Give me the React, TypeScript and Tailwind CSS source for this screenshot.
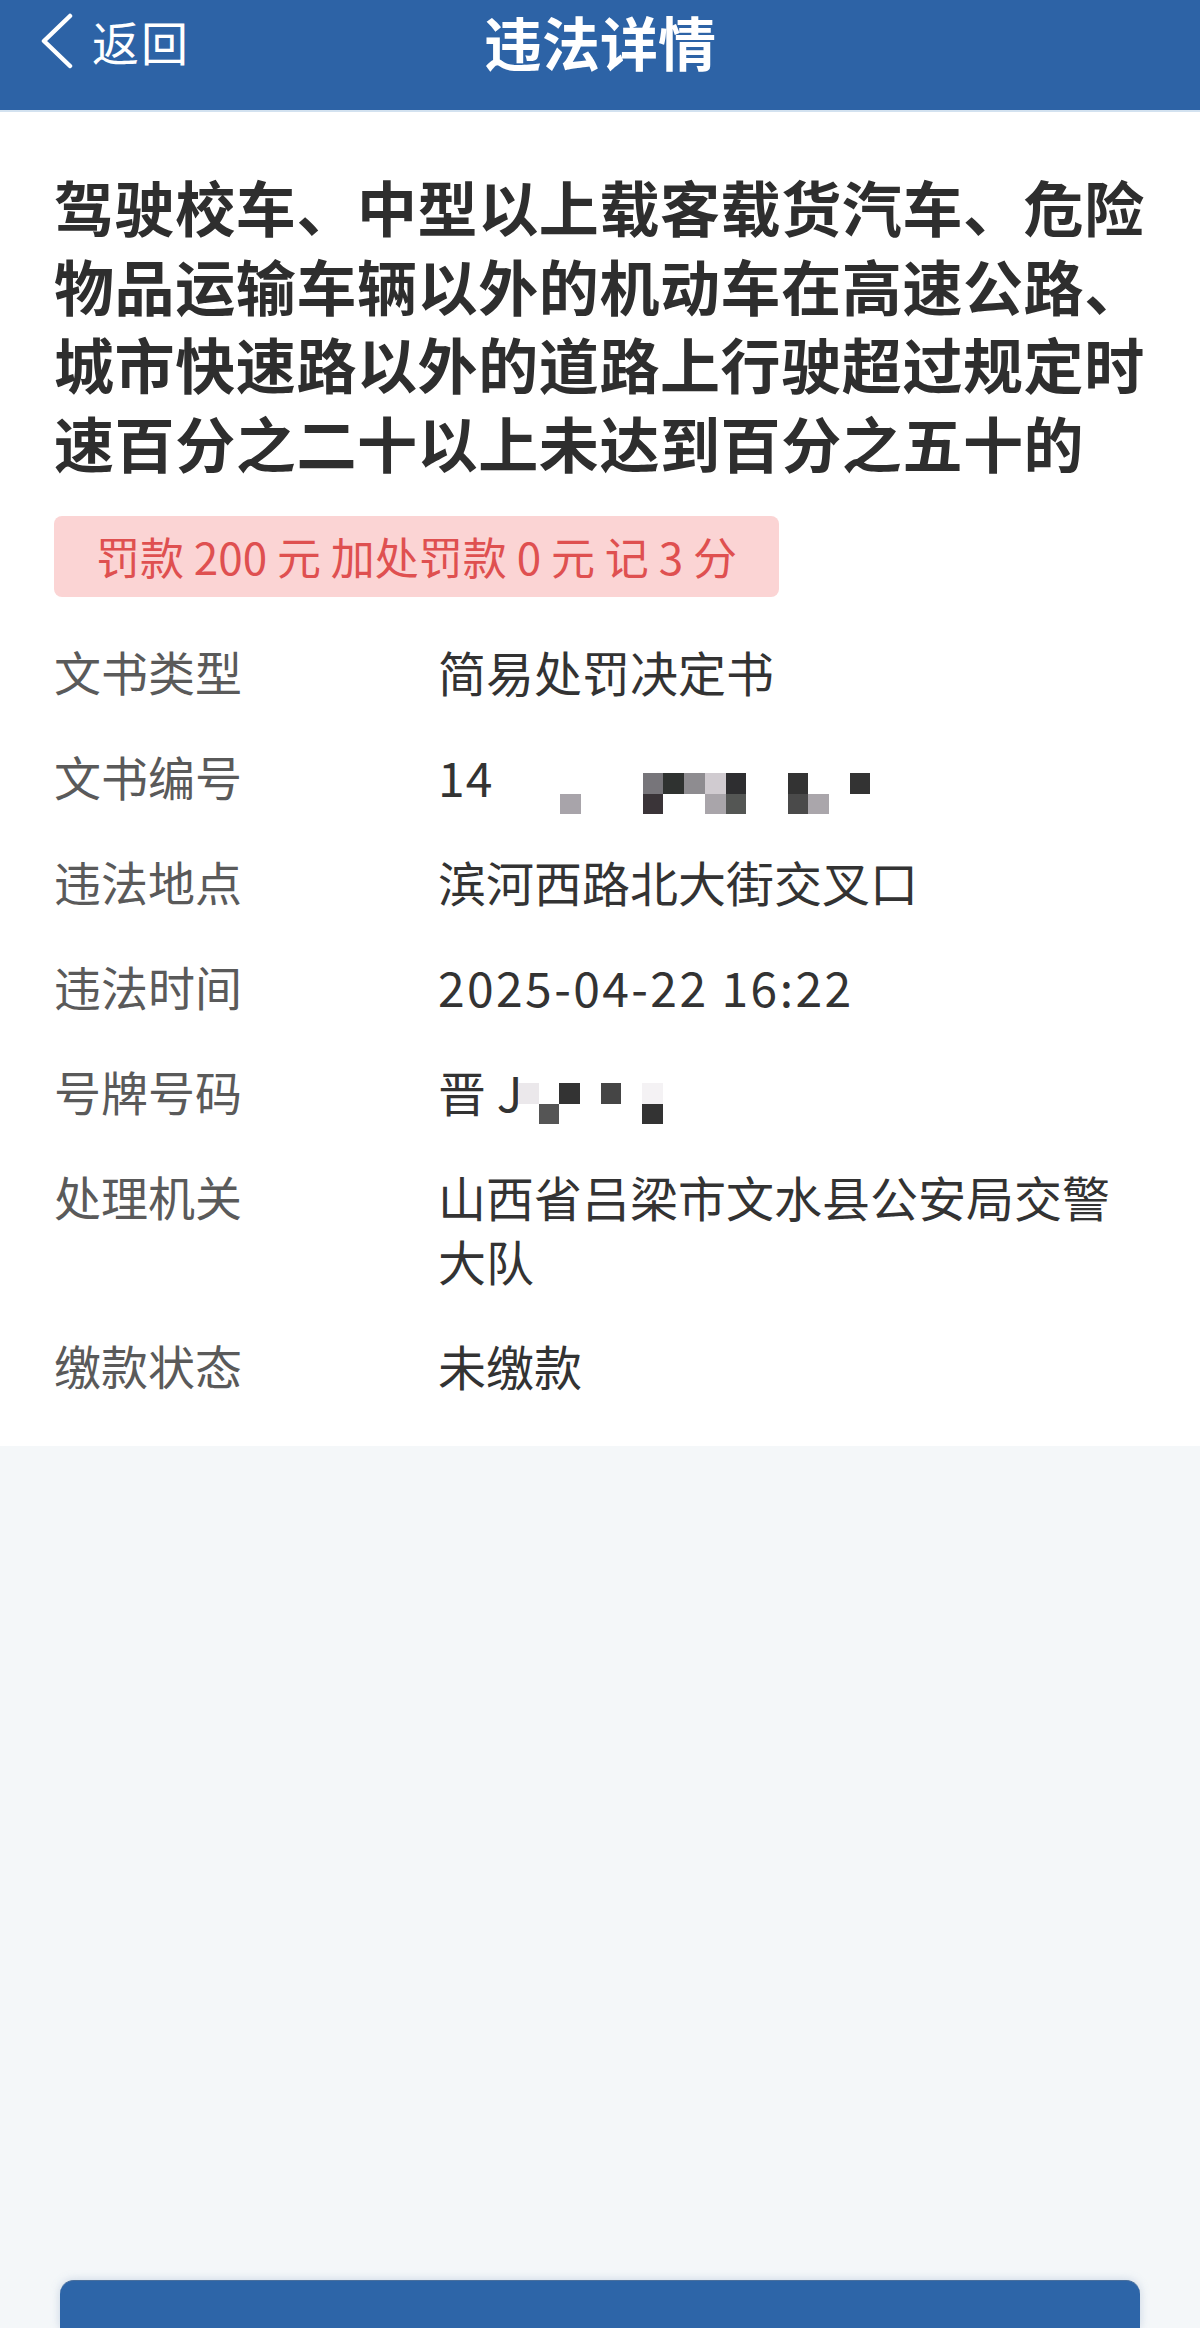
import React from 'react';

type Cell = string | null;

const DOC_MOSAIC: Cell[][] = [
  [null, null, null, null, '#77757a', '#2f3230', '#8e8c90', '#d0cbd0', '#2e2e30', null, null, '#333333', null, null, '#333333'],
  ['#a8a4aa', null, null, null, '#3a3438', null, null, '#a9a5aa', '#545654', null, null, '#4a4a4a', '#aaa6ab', null, null],
];

const PLATE_MOSAIC: Cell[][] = [
  ['#ebe8eb', null, '#333333', null, '#454545', null, '#f4f2f4'],
  [null, '#555555', null, null, null, null, '#333333'],
];

const Mosaic: React.FC<{ cells: Cell[][]; className: string }> = ({ cells, className }) => (
  <div className={`absolute flex flex-col ${className}`}>
    {cells.map((row, r) => (
      <div key={r} className="flex">
        {row.map((c, i) => (
          <div key={i} className="w-[20.7px] h-[20.7px]" style={{ backgroundColor: c ?? 'transparent' }} />
        ))}
      </div>
    ))}
  </div>
);

const Row: React.FC<{ label: string; children: React.ReactNode }> = ({ label, children }) => (
  <div className="flex leading-[64px]">
    <div className="w-[384px] shrink-0 text-[47px] text-[#5a5a5a]">{label}</div>
    <div className="relative flex-1 text-[48px] text-[#333333]">{children}</div>
  </div>
);

export default function App() {
  return (
    <div className="w-[1200px] h-[2328px] overflow-hidden flex flex-col bg-[#f4f7f9] font-['Noto_Sans_CJK_SC','Noto_Sans',sans-serif]">
      {/* header */}
      <div className="relative h-[112px] shrink-0 bg-[#2d63a6] border-b-2 border-[#d3e2f0]">
        <div className="flex items-center h-[60px] mt-[11px] pl-[40px]">
          <svg width="34" height="56" viewBox="0 0 34 56" fill="none">
            <path d="M30 3 L4 28 L30 53" stroke="white" strokeWidth="4.5" strokeLinecap="round" strokeLinejoin="round" />
          </svg>
          <span className="ml-[18px] text-[47px] text-white tracking-[2px]">返回</span>
        </div>
        <div className="absolute left-0 right-0 top-[11px] h-[60px] flex items-center justify-center text-[58px] font-bold text-white">
          违法详情
        </div>
      </div>

      {/* detail card */}
      <div className="bg-white shrink-0 pl-[54px] pr-[52px] pt-[55px] pb-[49px] flex flex-col">
        <h1 className="text-[60px] leading-[78.7px] font-bold text-[#2e2e2e] tracking-[0.6px]">
          驾驶校车、中型以上载客载货汽车、危险物品运输车辆以外的机动车在高速公路、城市快速路以外的道路上行驶超过规定时速百分之二十以上未达到百分之五十的
        </h1>
        <div className="self-start mt-[34px] h-[81px] px-[42px] flex items-center rounded-[8px] bg-[#fbd4d4] text-[44px] text-[#df5050]">
          罚款 200 元 加处罚款 0 元 记 3 分
        </div>

        <div className="mt-[42px] flex flex-col gap-[41px]">
          <Row label="文书类型">简易处罚决定书</Row>
          <Row label="文书编号">
            <span className="tracking-[1px]">14</span>
            <Mosaic cells={DOC_MOSAIC} className="left-[122px] top-[29px]" />
          </Row>
          <Row label="违法地点">滨河西路北大街交叉口</Row>
          <Row label="违法时间">
            <span className="tracking-[2.4px]">2025-04-22 16:22</span>
          </Row>
          <Row label="号牌号码">
            晋 J
            <Mosaic cells={PLATE_MOSAIC} className="left-[80px] top-[24px]" />
          </Row>
          <Row label="处理机关">山西省吕梁市文水县公安局交警大队</Row>
          <Row label="缴款状态">未缴款</Row>
        </div>
      </div>

      <div className="flex-1" />

      {/* bottom action button (cut off by the screen edge) */}
      <div className="shrink-0 mx-[60px] h-[48px] rounded-t-[14px] bg-[#2d65a8] border-t border-[#4a6f9c] shadow-[0_0_10px_rgba(120,150,190,0.35)]" />
    </div>
  );
}
